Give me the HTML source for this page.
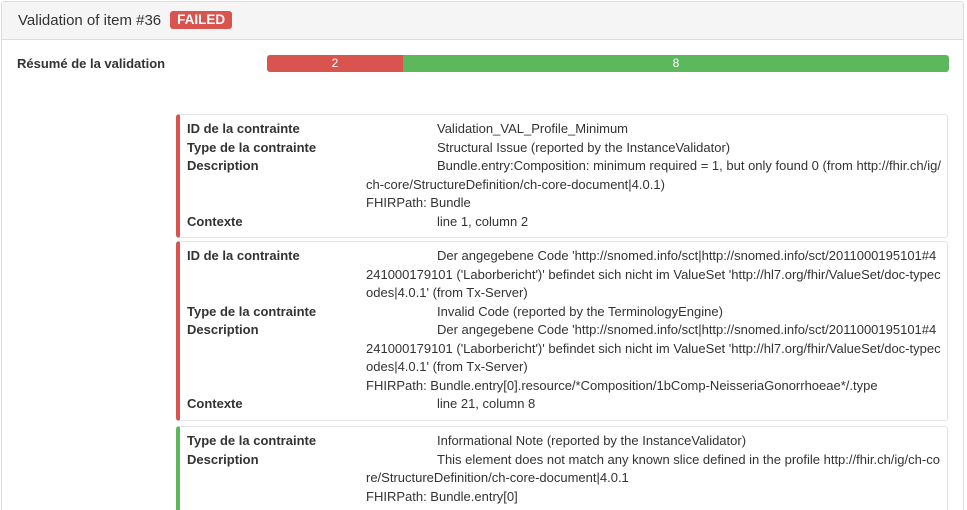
<!DOCTYPE html>
<html><head><style>
html,body{margin:0;height:510px;overflow:hidden}
body{background:#fff;font-family:"Liberation Sans",Arial,sans-serif;color:#333;font-size:13px;width:967px;position:relative}
.panel{position:absolute;left:1px;top:1px;width:961px;height:515px;border:1px solid #ddd;border-bottom:0;border-radius:3px 3px 0 0}
.head{height:37px;background:#f5f5f5;border-bottom:1px solid #ddd;padding-left:16px;line-height:37px;font-size:15px}
.badge{display:inline-block;background:#d9534f;color:#fff;font-weight:bold;font-size:13.5px;line-height:18px;padding:0 7px;border-radius:3px;margin-left:9px;vertical-align:1px}
.sum{position:absolute;left:17px;top:56px;font-weight:bold;font-size:13px}
.bar{position:absolute;left:267px;top:55px;width:682px;height:17px;border-radius:3px;overflow:hidden;display:flex;color:#fff;font-size:12px;line-height:17px;text-align:center}
.card{position:absolute;left:176px;width:760px;border:1px solid #e5e5e5;border-left:4px solid #d9534f;border-radius:3px;padding:5px 0 0 7px;line-height:18.5px;white-space:nowrap}
.card.g{border-left-color:#5cb85c;border-bottom:0;border-radius:3px 3px 0 0}
.row{position:relative;padding-left:179px}
.row b{position:absolute;left:0;top:0;font-weight:bold}
.row .f{padding-left:71px}
</style></head><body>
<div class="panel">
<div class="head">Validation of item #36<span class="badge">FAILED</span></div>
</div>
<div class="sum">Résumé de la validation</div>
<div class="bar"><div style="width:136px;background:#d9534f">2</div><div style="flex:1;background:#5cb85c">8</div></div>

<div class="card" style="top:114px;height:117px">
<div class="row"><b>ID de la contrainte</b><div class="f">Validation_VAL_Profile_Minimum</div></div>
<div class="row"><b>Type de la contrainte</b><div class="f">Structural Issue (reported by the InstanceValidator)</div></div>
<div class="row"><b>Description</b><div class="f">Bundle.entry:Composition: minimum required = 1, but only found 0 (from http://fhir.ch/ig/</div>ch-core/StructureDefinition/ch-core-document|4.0.1)<br>FHIRPath: Bundle</div>
<div class="row"><b>Contexte</b><div class="f">line 1, column 2</div></div>
</div>

<div class="card" style="top:241px;height:173px">
<div class="row"><b>ID de la contrainte</b><div class="f">Der angegebene Code 'http://snomed.info/sct|http://snomed.info/sct/2011000195101#4</div>241000179101 ('Laborbericht')' befindet sich nicht im ValueSet 'http://hl7.org/fhir/ValueSet/doc-typec<br>odes|4.0.1' (from Tx-Server)</div>
<div class="row"><b>Type de la contrainte</b><div class="f">Invalid Code (reported by the TerminologyEngine)</div></div>
<div class="row"><b>Description</b><div class="f">Der angegebene Code 'http://snomed.info/sct|http://snomed.info/sct/2011000195101#4</div>241000179101 ('Laborbericht')' befindet sich nicht im ValueSet 'http://hl7.org/fhir/ValueSet/doc-typec<br>odes|4.0.1' (from Tx-Server)<br>FHIRPath: Bundle.entry[0].resource/*Composition/1bComp-NeisseriaGonorrhoeae*/.type</div>
<div class="row"><b>Contexte</b><div class="f">line 21, column 8</div></div>
</div>

<div class="card g" style="top:426px;height:79px">
<div class="row"><b>Type de la contrainte</b><div class="f">Informational Note (reported by the InstanceValidator)</div></div>
<div class="row"><b>Description</b><div class="f">This element does not match any known slice defined in the profile http://fhir.ch/ig/ch-co</div>re/StructureDefinition/ch-core-document|4.0.1<br>FHIRPath: Bundle.entry[0]</div>
</div>
</body></html>
